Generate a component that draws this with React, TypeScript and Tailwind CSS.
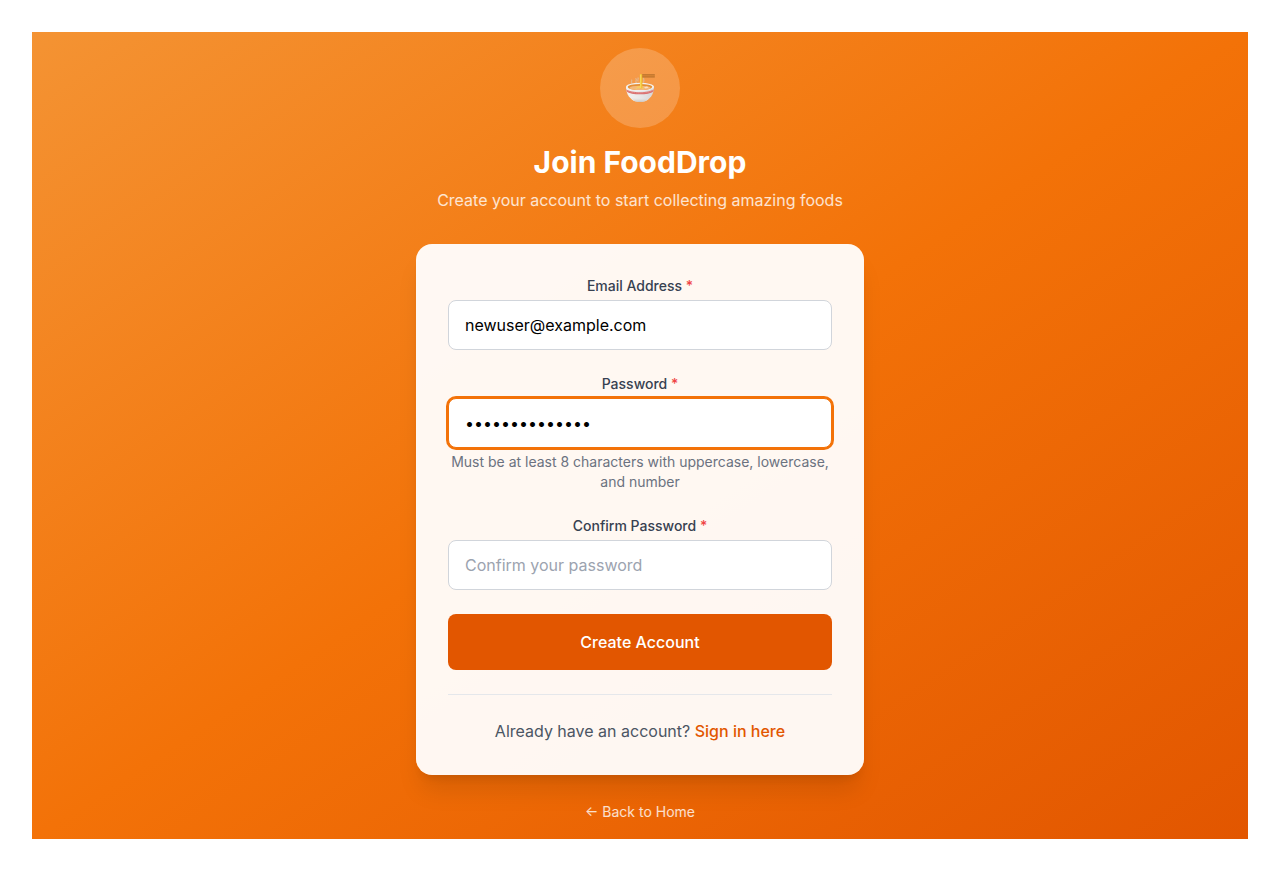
import React from "react";

function RamenIcon() {
  return (
    <svg viewBox="0 0 32 32" className="size-8" aria-hidden="true">
      <defs>
        <linearGradient id="bowl" x1="0" x2="1" y1="0" y2="0">
          <stop offset="0" stopColor="#f4f2f0" />
          <stop offset="0.5" stopColor="#e9e8e8" />
          <stop offset="1" stopColor="#d6d6d7" />
        </linearGradient>
        <linearGradient id="foot" x1="0" x2="0" y1="0" y2="1">
          <stop offset="0" stopColor="#e8e8e8" stopOpacity="0" />
          <stop offset="1" stopColor="#c9c4c0" />
        </linearGradient>
      </defs>
      <path d="M12.500 11c-2-1.600 1-2.600-.6-4.400M8 11.500c-1.600-1.200.4-2.200-.4-3.400M14 9c-1-1.200 1-1.800 0-3M19.500 10c1.400-1.400-.6-2.600.2-4" fill="none" stroke="#dcc6b0" strokeWidth="1.300" strokeLinecap="round" opacity="0.6" />
      <path d="M2 15c0 7.500 4.200 12.200 9 14.300 2.500 1 7.500 1 10 0 4.800-2.100 9-6.800 9-14.300z" fill="url(#bowl)" />
      <path d="M7 25c3 2 15 2 18 0-1.200 2-2.500 3.500-4 4.300-2.500 1-7.500 1-10 0-1.500-.8-2.800-2.300-4-4.300z" fill="url(#foot)" />
      <path d="M2.200 17.200c4.500 4 23.100 4 27.600 0l-.5 2.200c-4.600 3.800-22 3.800-26.600 0z" fill="#d96d6c" />
      <path d="M2.800 18.400c5 3.500 21.400 3.500 26.400 0" fill="none" stroke="#eeb4b2" strokeWidth="0.600" strokeDasharray="1 1" />
      <ellipse cx="16" cy="14.800" rx="14" ry="4" fill="#f3f1ee" />
      <ellipse cx="16" cy="15" rx="12.200" ry="3.100" fill="#e58f35" />
      <ellipse cx="16" cy="15.900" rx="10.500" ry="2.200" fill="#f4b87a" />
      <path d="M11.500 16.700c2-1.600 6-1.600 8 0M13 15.300c2-1 4-1 6 0" fill="none" stroke="#f6d25a" strokeWidth="0.900" />
      <path d="M20 15.300l3-.8 1.600 1-3 1z" fill="#f9dfc5" />
      <path d="M15.700 2.500q1.400-.8 2.700 0v13.700h-2.400z" fill="#f0bd32" />
      <path d="M16.700 2.500v13.500" stroke="#fbe06b" strokeWidth="0.900" />
      <path d="M18.200 2.200h12.600v1.300H18.200zM18.200 4.300h12.600v1.200H18.200z" fill="#b8702a" />
      <path d="M18.200 3.500h12.600v.8H18.200z" fill="#d07f2e" />
    </svg>
  );
}

interface FieldProps {
  id: string;
  label: string;
  type: string;
  value?: string;
  placeholder?: string;
  hint?: string;
  active?: boolean;
}

function Field({ id, label, type, value, placeholder, hint, active }: FieldProps) {
  return (
    <div>
      <label htmlFor={id} className="mb-1 block text-sm font-medium text-[#374151]">
        {label} <span className="text-[#ef4444]">*</span>
      </label>
      <input
        id={id}
        type={type}
        defaultValue={value}
        placeholder={placeholder}
        autoComplete="off"
        aria-describedby={hint ? `${id}-hint` : undefined}
        className={
          "block w-full rounded-lg border bg-white px-4 py-3 text-base text-black outline-none placeholder:text-[#9ca3af] focus:border-[#f37208] focus:ring-2 focus:ring-[#f37208] " +
          (active ? "border-[#f37208] ring-2 ring-[#f37208]" : "border-[#d1d5db]")
        }
      />
      {hint && (
        <p id={`${id}-hint`} className="mt-1 text-sm text-[#6b7280]">
          {hint}
        </p>
      )}
    </div>
  );
}

export default function App() {
  return (
    <div className="min-h-screen bg-white py-8 pr-[17px] pl-8 text-center font-['Inter',sans-serif]">
      <main className="flex flex-col items-center justify-center bg-[linear-gradient(to_bottom_right,#f49333_0%,#f37208_50%,#e25600_100%)] p-4">
        <div className="w-full max-w-md">
          <header className="mb-8">
            <div className="mx-auto mb-4 flex size-20 items-center justify-center rounded-full bg-white/20">
              <RamenIcon />
            </div>
            <h1 className="mb-2 text-3xl font-bold text-white">Join FoodDrop</h1>
            <p className="text-base text-white/80">Create your account to start collecting amazing foods</p>
          </header>

          <section className="rounded-2xl bg-white/95 p-8 shadow-xl">
            <form className="space-y-6" onSubmit={(e) => e.preventDefault()}>
              <Field id="email" label="Email Address" type="email" value="newuser@example.com" />
              <Field
                id="password"
                label="Password"
                type="password"
                value="SecurePass1234"
                hint="Must be at least 8 characters with uppercase, lowercase, and number"
                active
              />
              <Field id="confirm" label="Confirm Password" type="password" placeholder="Confirm your password" />
              <button type="submit" className="w-full rounded-lg bg-[#e25600] px-6 py-4 text-base font-medium text-white">
                Create Account
              </button>
            </form>
            <div className="mt-6 border-t border-[#e5e7eb] pt-6">
              <p className="text-base text-[#4b5563]">
                Already have an account?{" "}
                <a href="#signin" className="font-medium text-[#e25600]">
                  Sign in here
                </a>
              </p>
            </div>
          </section>

          <div className="mt-6">
            <a href="#home" className="text-sm text-white/80">
              ← Back to Home
            </a>
          </div>
        </div>
      </main>
    </div>
  );
}
